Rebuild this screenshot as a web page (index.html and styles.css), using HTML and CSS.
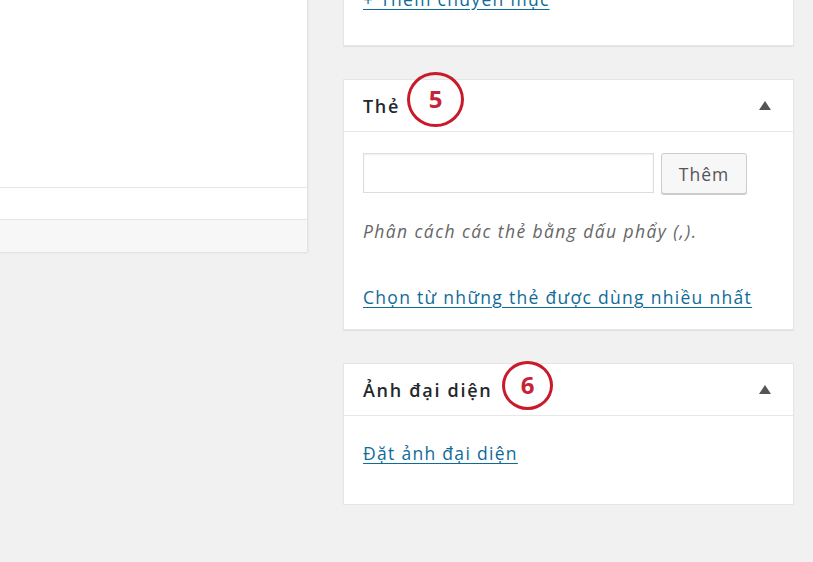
FILE: index.html
```html
<!DOCTYPE html>
<html lang="vi">
<head>
<meta charset="utf-8">
<link rel="stylesheet" href="styles.css">
</head>
<body>
<div class="page">
  <div class="main">
    <div class="editor"></div>
    <div class="status-row"></div>
    <div class="footer-row"></div>
  </div>
  <div class="side">
    <div class="box box-cat">
      <a class="link" href="#">+ Thêm chuyên mục</a>
    </div>
    <div class="box box-tags">
      <div class="box-head">
        <h2 class="box-title">Thẻ<span class="mark mark-5">5</span></h2>
        <span class="toggle"></span>
      </div>
      <div class="box-body">
        <div class="tag-row">
          <input class="tag-input" type="text">
          <button class="btn">Thêm</button>
        </div>
        <p class="hint">Phân cách các thẻ bằng dấu phẩy (,).</p>
        <a class="link link-cloud" href="#">Chọn từ những thẻ được dùng nhiều nhất</a>
      </div>
    </div>
    <div class="box box-thumb">
      <div class="box-head">
        <h2 class="box-title">Ảnh đại diện<span class="mark mark-6">6</span></h2>
        <span class="toggle"></span>
      </div>
      <div class="box-body">
        <a class="link" href="#">Đặt ảnh đại diện</a>
      </div>
    </div>
  </div>
</div>
</body>
</html>
```
FILE: styles.css
```css
html, body {
  margin: 0;
  padding: 0;
  background: #f1f1f1;
  font-family: "Open Sans", "Noto Sans", sans-serif;
  color: #444;
  overflow: hidden;
}
.page {
  display: grid;
  grid-template-columns: 308px 451px;
  column-gap: 35px;
  margin-top: -30px;
  align-items: start;
}
.main {
  background: #fff;
  border-right: 1px solid #e2e2e2;
  box-shadow: 0 1px 2px rgba(0,0,0,0.08);
}
.editor {
  height: 217px;
}
.status-row {
  height: 31px;
  border-top: 1px solid #e5e5e5;
}
.footer-row {
  height: 32px;
  border-top: 1px solid #e5e5e5;
  background: #f7f7f7;
}
.side {
  display: flex;
  flex-direction: column;
  gap: 33px;
}
.box {
  background: #fff;
  border: 1px solid #e5e5e5;
  box-shadow: 0 1px 1px rgba(0,0,0,0.05);
}
.box-cat {
  padding: 16px 19px 0;
  height: 58px;
}
.link {
  color: #0f6b97;
  font-size: 17.5px;
  line-height: 24px;
  letter-spacing: 1.3px;
  text-decoration: underline;
  text-underline-offset: 3px;
}
.box-head {
  display: flex;
  align-items: center;
  justify-content: space-between;
  height: 51px;
  padding: 0 22px 0 19px;
  border-bottom: 1px solid #e8e8e8;
}
.box-title {
  margin: 0;
  font-size: 18px;
  line-height: 24px;
  font-weight: 600;
  letter-spacing: 1.7px;
  color: #23282d;
  position: relative;
}
.toggle {
  width: 0;
  height: 0;
  border-left: 6px solid transparent;
  border-right: 6px solid transparent;
  border-bottom: 9px solid #555;
}
.mark {
  position: absolute;
  display: flex;
  align-items: center;
  justify-content: center;
  border: 3px solid #c81a2b;
  border-radius: 50%;
  color: #c42438;
  font-weight: 700;
  font-size: 24px;
  letter-spacing: 0;
  box-sizing: border-box;
}
.mark-5 {
  left: 44px;
  top: -22px;
  width: 57px;
  height: 55px;
}
.mark-6 {
  left: 139px;
  top: -17px;
  width: 51px;
  height: 49px;
}
.box-body {
  padding: 0 19px;
}
.box-tags .box-body {
  padding-top: 21px;
  height: 176px;
}
.tag-row {
  display: flex;
  gap: 7px;
}
.tag-input {
  width: 291px;
  height: 40px;
  box-sizing: border-box;
  border: 1px solid #ddd;
  box-shadow: inset 0 1px 2px rgba(0,0,0,0.07);
  margin: 0;
}
.btn {
  width: 86px;
  height: 41px;
  border: 1px solid #ccc;
  border-radius: 3px;
  background: #f7f7f7;
  box-shadow: 0 1px 0 #ccc;
  color: #555;
  font-family: "Open Sans", "Noto Sans", sans-serif;
  font-size: 17.5px;
  letter-spacing: 1px;
  padding: 0;
}
.hint {
  margin: 25px 0 42px;
  font-style: italic;
  color: #666;
  font-size: 17.5px;
  line-height: 24px;
  letter-spacing: 1.4px;
}
.box-thumb .box-body {
  padding-top: 25px;
  height: 63px;
}
```
